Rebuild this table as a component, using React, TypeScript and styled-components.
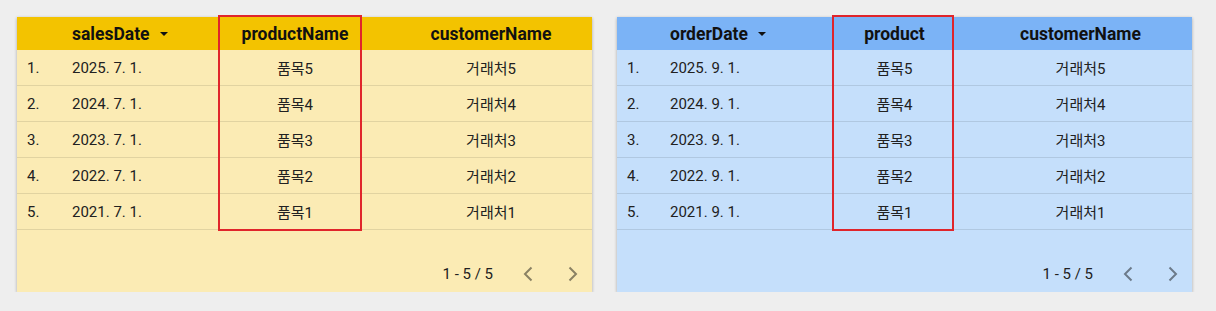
import styled, { createGlobalStyle } from 'styled-components';

type Row = { date: string; product: string; customer: string };

type TableProps = {
  dateLabel: string;
  productLabel: string;
  rows: Row[];
  columns: string;
  header: string;
  body: string;
  highlight: { left: number; width: number };
};

const GlobalStyle = createGlobalStyle`
  body {
    margin: 0;
    background: #eeeeee;
    font-family: Roboto, "Noto Sans CJK KR", sans-serif;
    color: #212121;
  }
`;

const makeRows = (month: number): Row[] =>
  [5, 4, 3, 2, 1].map((n, i) => ({
    date: `${2025 - i}. ${month}. 1.`,
    product: `품목${n}`,
    customer: `거래처${n}`,
  }));

const ChevronLeft = () => (
  <svg width="12" height="18" viewBox="0 0 12 18">
    <polyline points="9.5,2.5 3,9 9.5,15.5" fill="none" stroke="currentColor" strokeWidth="2" />
  </svg>
);

const ChevronRight = () => (
  <svg width="12" height="18" viewBox="0 0 12 18">
    <polyline points="2.5,2.5 9,9 2.5,15.5" fill="none" stroke="currentColor" strokeWidth="2" />
  </svg>
);

const DataTable = ({ dateLabel, productLabel, rows, columns, header, body, highlight }: TableProps) => (
  <Card $bg={body}>
    <HeaderRow $columns={columns} $bg={header}>
      <span />
      <HeadCell>
        {dateLabel}
        <SortArrow />
      </HeadCell>
      <HeadCell $center>{productLabel}</HeadCell>
      <HeadCell $center>customerName</HeadCell>
    </HeaderRow>
    {rows.map((r, i) => (
      <BodyRow key={i} $columns={columns}>
        <IndexCell>{i + 1}.</IndexCell>
        <Cell>{r.date}</Cell>
        <Cell $center>{r.product}</Cell>
        <Cell $center>{r.customer}</Cell>
      </BodyRow>
    ))}
    <Pager>
      <PageInfo>1 - 5 / 5</PageInfo>
      <PageButton>
        <ChevronLeft />
      </PageButton>
      <PageButton>
        <ChevronRight />
      </PageButton>
    </Pager>
    <Highlight style={{ left: highlight.left, width: highlight.width }} />
  </Card>
);

const App = () => (
  <>
    <GlobalStyle />
    <Page>
      <DataTable
        dateLabel="salesDate"
        productLabel="productName"
        rows={makeRows(7)}
        columns="45px 138px 190px 1fr"
        header="#f3c300"
        body="#fbebb4"
        highlight={{ left: 201, width: 144 }}
      />
      <DataTable
        dateLabel="orderDate"
        productLabel="product"
        rows={makeRows(9)}
        columns="43px 160px 149px 1fr"
        header="#7bb3f6"
        body="#c5dffb"
        highlight={{ left: 215, width: 122 }}
      />
    </Page>
  </>
);

const Page = styled.div`
  display: flex;
  gap: 25px;
  padding: 17px 0 0 17px;
`;

const Card = styled.div<{ $bg: string }>`
  position: relative;
  width: 575px;
  height: 275px;
  background: ${(p) => p.$bg};
  box-shadow: 0 1px 3px rgba(0, 0, 0, 0.3);
  display: flex;
  flex-direction: column;
`;

const HeaderRow = styled.div<{ $columns: string; $bg: string }>`
  display: grid;
  grid-template-columns: ${(p) => p.$columns};
  align-items: center;
  height: 33px;
  background: ${(p) => p.$bg};
`;

const HeadCell = styled.div<{ $center?: boolean }>`
  display: flex;
  align-items: center;
  justify-content: ${(p) => (p.$center ? 'center' : 'flex-start')};
  padding-left: ${(p) => (p.$center ? '0' : '10px')};
  font-size: 17.5px;
  font-weight: 700;
  color: #111;
`;

const SortArrow = styled.span`
  margin-left: 10px;
  width: 0;
  height: 0;
  border-left: 4px solid transparent;
  border-right: 4px solid transparent;
  border-top: 4px solid #111;
`;

const BodyRow = styled.div<{ $columns: string }>`
  display: grid;
  grid-template-columns: ${(p) => p.$columns};
  align-items: center;
  height: 35px;
  border-bottom: 1px solid rgba(0, 0, 0, 0.1);
  font-size: 15px;
`;

const IndexCell = styled.div`
  padding-left: 10px;
`;

const Cell = styled.div<{ $center?: boolean }>`
  text-align: ${(p) => (p.$center ? 'center' : 'left')};
  padding-left: ${(p) => (p.$center ? '0' : '10px')};
`;

const Pager = styled.div`
  margin-top: auto;
  height: 36px;
  display: flex;
  align-items: center;
  justify-content: flex-end;
  padding-right: 7px;
`;

const PageInfo = styled.div`
  font-size: 15px;
  margin-right: 23px;
`;

const PageButton = styled.div`
  display: flex;
  align-items: center;
  justify-content: center;
  width: 24px;
  height: 24px;
  color: rgba(0, 0, 0, 0.45);

  & + & {
    margin-left: 21px;
  }
`;

const Highlight = styled.div`
  position: absolute;
  top: -2px;
  height: 216px;
  box-sizing: border-box;
  border: 2px solid #e0252b;
  pointer-events: none;
`;

export default App;
